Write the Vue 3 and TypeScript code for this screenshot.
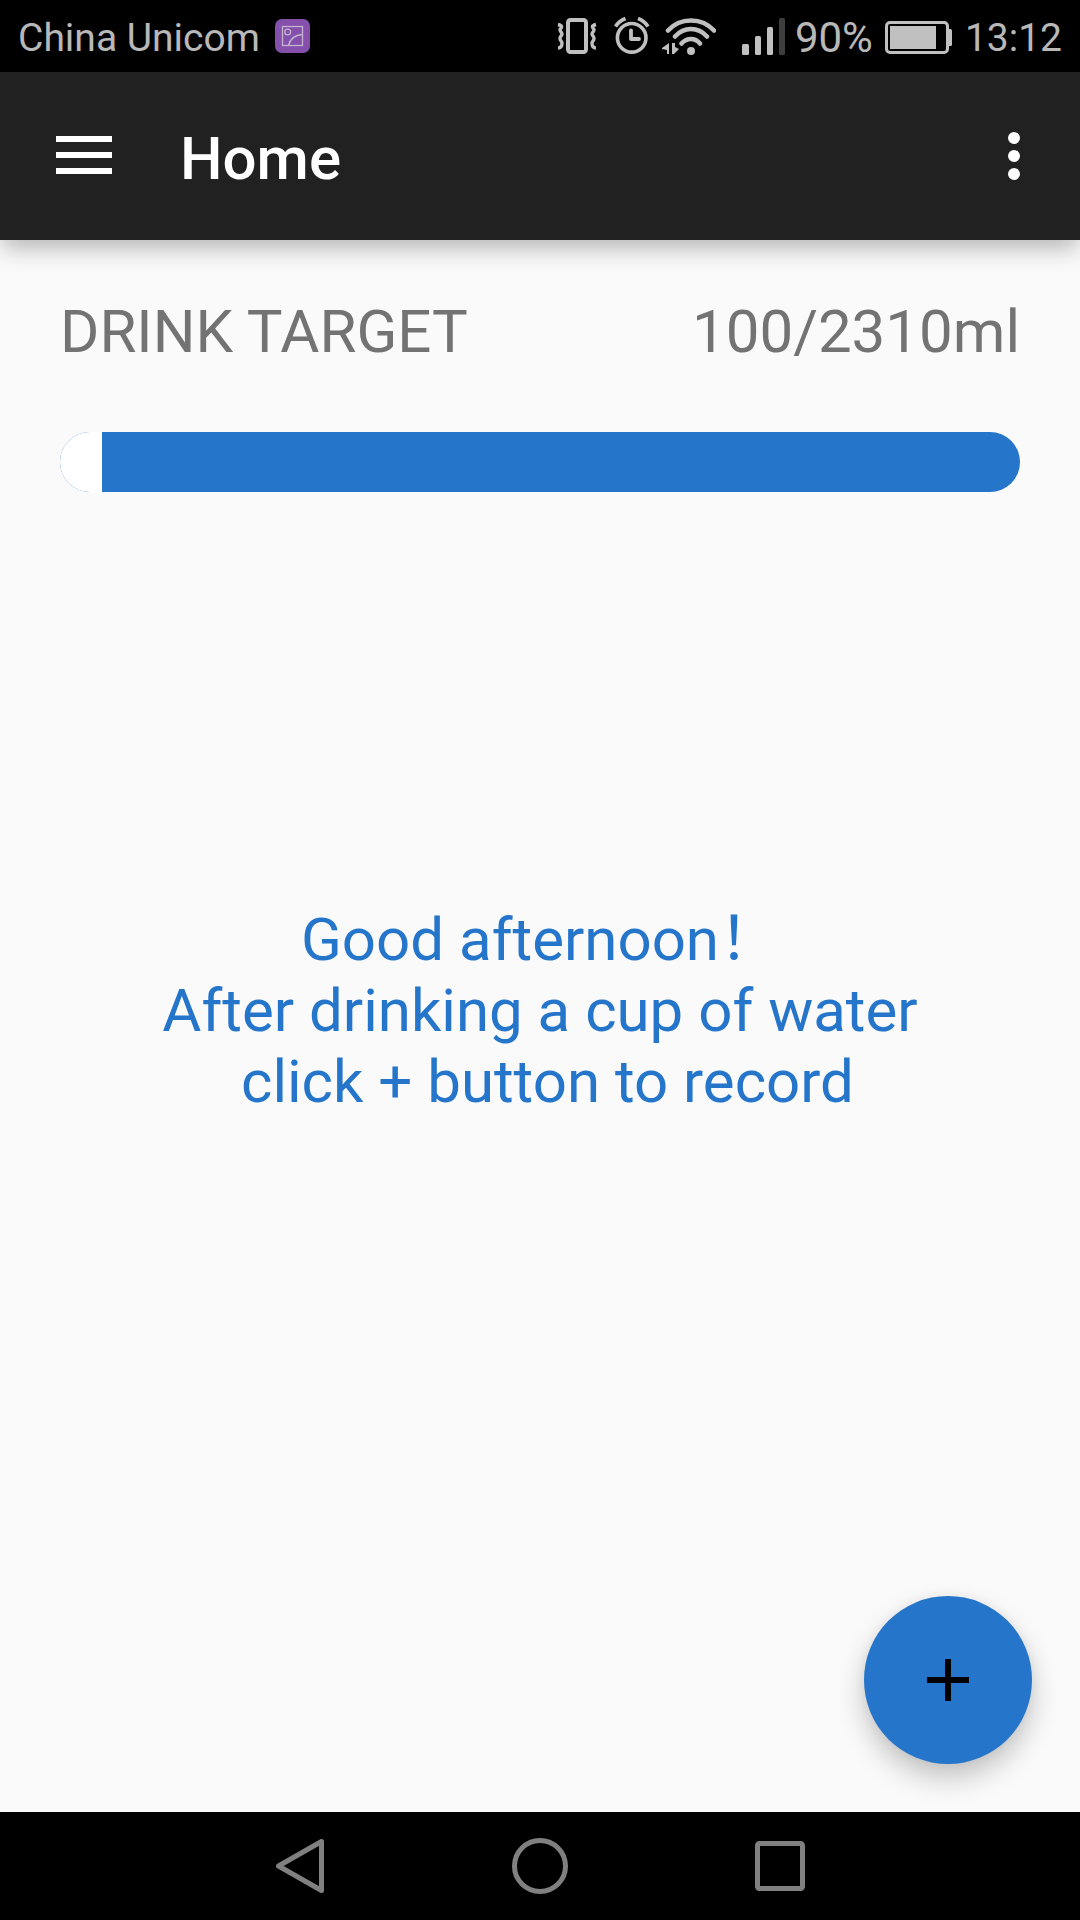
<script setup lang="ts">
import { computed, ref } from 'vue'

const carrier = 'China Unicom'
const battery = '90%'
const clock = '13:12'
const drunk = ref(100)
const target = ref(2310)
const amount = computed(() => `${drunk.value}/${target.value}ml`)

function addCup(): void {
  drunk.value = Math.min(drunk.value + 100, target.value)
}
</script>

<template>
  <div class="screen">
    <header class="status">
      <span>{{ carrier }}</span>
      <svg class="picture" width="36" height="36" viewBox="0 0 36 36" aria-hidden="true">
        <rect x="0" y="1" width="35" height="34" rx="7" fill="#8450ab" />
        <g fill="none" stroke="#c4b4d0" stroke-width="1.3">
          <rect x="7.5" y="8.5" width="20" height="19" />
          <circle cx="12.7" cy="14" r="2.9" />
          <path d="M13.5 27.5C15 21 20 17 27.5 16.5" />
        </g>
      </svg>
      <div class="indicators">
        <svg width="40" height="40" viewBox="0 0 40 40" fill="none" stroke="#c0c0c0" aria-hidden="true">
          <rect x="11" y="4" width="18" height="32" rx="2.5" stroke-width="4" />
          <path d="M1 8.500C7 10 4 12 3 13.500C3 16 5 16 5 18C5 20 3 20 3 22.500C3 25 5 25 5 27C5 30 4 32 1 32M39 8.500C33 10 36 12 37 13.500C37 16 35 16 35 18C35 20 37 20 37 22.500C37 25 35 25 35 27C35 30 36 32 39 32" stroke-width="3.4" />
        </svg>
        <svg class="alarm" width="36" height="40" viewBox="0 0 36 40" fill="none" stroke="#c0c0c0" aria-hidden="true">
          <circle cx="17.700" cy="21.800" r="14.300" stroke-width="3.600" />
          <path d="M17 14.500V23h8" stroke-width="3.800" stroke-linejoin="round" stroke-linecap="round" />
          <path d="M1.500 10.500Q5 5 11.500 2.500M34 10.500Q30.500 5 24 2.500" stroke-width="3.600" />
        </svg>
        <svg class="wifi" width="54" height="40" viewBox="0 0 54 40" fill="none" stroke="#c0c0c0" aria-hidden="true">
          <path d="M6 14.500C18 1 40 1 52 14.500M13 20.500C22 10.500 36 10.500 45 20.500M19.500 27.500C25 21.500 33 21.500 38 27.500" stroke-width="4.500" stroke-linecap="round" />
          <circle cx="29" cy="35" r="4" fill="#c0c0c0" stroke="none" />
          <path d="M7 27V38H5V34L0 33V32ZM10 27H13V31L17 33L12 38H10Z" fill="#c0c0c0" stroke="none" />
        </svg>
        <svg class="signal" width="43" height="40" viewBox="0 0 43 40" fill="#c0c0c0" aria-hidden="true">
          <rect x="0" y="28" width="7" height="11" rx="1.500" />
          <rect x="13" y="20" width="6" height="19" rx="1.500" />
          <rect x="25" y="11" width="6" height="28" rx="1.500" />
          <rect x="37" y="2" width="6" height="37" rx="1.500" fill="#3e3e3e" />
        </svg>
        <span class="percent">{{ battery }}</span>
        <svg class="battery" width="68" height="40" viewBox="0 0 68 40" fill="#c0c0c0" aria-hidden="true">
          <rect x="1.500" y="6.500" width="61" height="30" rx="3.500" fill="none" stroke="#c0c0c0" stroke-width="3" />
          <rect x="5" y="10" width="46" height="23" />
          <path d="M64 13h1.500q1.500 0 1.500 1.500v14q0 1.500-1.500 1.500H64z" />
        </svg>
        <span>{{ clock }}</span>
      </div>
    </header>

    <div class="appbar">
      <button class="icon-button" type="button" aria-label="Open menu">
        <svg width="56" height="40" viewBox="0 0 56 40" fill="#fff">
          <path d="M0 0h56v6H0zM0 16h56v6H0zM0 32h56v6H0z" />
        </svg>
      </button>
      <h1>Home</h1>
      <button class="icon-button more" type="button" aria-label="More options">
        <svg width="12" height="48" viewBox="0 0 12 48" fill="#fff">
          <circle cx="6" cy="6" r="6" />
          <circle cx="6" cy="24" r="6" />
          <circle cx="6" cy="42" r="6" />
        </svg>
      </button>
    </div>

    <main>
      <div class="target">
        <label for="intake">DRINK TARGET</label>
        <span>{{ amount }}</span>
      </div>
      <progress id="intake" :value="drunk" :max="target"></progress>
      <p class="message">Good afternoon！<br />After drinking a cup of water<br />&nbsp;click + button to record</p>
      <button class="fab" type="button" aria-label="Record a cup" @click="addCup">
        <svg width="44" height="44" viewBox="0 0 44 44" fill="#000">
          <path d="M19 1h6v18h18v6H25v18h-6V25H1v-6h18z" />
        </svg>
      </button>
    </main>

    <nav>
      <button type="button" aria-label="Back">
        <svg width="60" height="60" viewBox="0 0 60 60">
          <path d="M51.500 5.500V54.500L8.500 30Z" />
        </svg>
      </button>
      <button type="button" aria-label="Home screen">
        <svg width="60" height="60" viewBox="0 0 60 60">
          <circle cx="30" cy="30" r="25.500" />
        </svg>
      </button>
      <button type="button" aria-label="Recent apps">
        <svg width="60" height="60" viewBox="0 0 60 60">
          <rect x="7.500" y="7.500" width="45" height="45" rx="2" />
        </svg>
      </button>
    </nav>
  </div>
</template>

<style>
body {
  margin: 0;
  background: #fafafa;
}
</style>

<style scoped>
.screen {
  display: flex;
  flex-direction: column;
  min-height: 100vh;
  font-family: Roboto, "Noto Sans CJK SC", sans-serif;
}

svg {
  display: block;
  flex: none;
}

button {
  display: flex;
  align-items: center;
  justify-content: center;
  padding: 0;
  border: 0;
  background: none;
  cursor: pointer;
}

.status {
  display: flex;
  align-items: center;
  height: 72px;
  padding: 0 18px;
  box-sizing: border-box;
  background: #000;
  color: #b8b8b8;
  font-size: 39px;
  line-height: 68px;
  white-space: nowrap;
}

.status span {
  padding-top: 4px;
}

.status .percent {
  font-size: 42px;
}

.picture {
  margin-left: 15px;
}

.indicators {
  display: flex;
  align-items: center;
  margin-left: auto;
}

.alarm {
  margin-left: 17px;
}

.wifi {
  margin-left: 12px;
}

.signal {
  margin: 0 10px 0 26px;
}

.battery {
  margin: 0 12px;
}

.appbar {
  position: relative;
  z-index: 1;
  display: flex;
  align-items: center;
  height: 168px;
  padding: 0 48px 0 56px;
  box-sizing: border-box;
  background: #212121;
  box-shadow: 0 10px 22px -2px rgba(0, 0, 0, 0.28);
  color: #fff;
}

h1 {
  margin: 0 auto 0 68px;
  padding-top: 6px;
  font-size: 60px;
  font-weight: 500;
  line-height: 72px;
}

.more {
  width: 36px;
}

main {
  position: relative;
  display: flex;
  flex: 1;
  flex-direction: column;
  padding: 56px 60px 0;
  background: #fafafa;
  font-size: 60px;
  line-height: 71px;
}

.target {
  display: flex;
  justify-content: space-between;
  color: #737373;
}

progress {
  display: block;
  width: 100%;
  height: 60px;
  margin-top: 65px;
  border: 0;
  border-radius: 30px;
  appearance: none;
  background: #2575cb;
  overflow: hidden;
}

progress::-webkit-progress-bar {
  background: #2575cb;
}

progress::-webkit-progress-value {
  background: #fff;
}

.message {
  flex: 1;
  display: block;
  align-content: center;
  margin: 0;
  padding-bottom: 284px;
  color: #2575cb;
  text-align: center;
}

.fab {
  position: absolute;
  right: 48px;
  bottom: 48px;
  width: 168px;
  height: 168px;
  border-radius: 50%;
  background: #2575cb;
  box-shadow: 0 14px 28px rgba(0, 0, 0, 0.22), 0 0 12px rgba(0, 0, 0, 0.05);
}

nav {
  display: flex;
  justify-content: center;
  gap: 120px;
  height: 108px;
  background: #000;
}

nav button {
  width: 120px;
}

nav svg {
  fill: none;
  stroke: #808080;
  stroke-width: 5;
  stroke-linejoin: round;
}
</style>
